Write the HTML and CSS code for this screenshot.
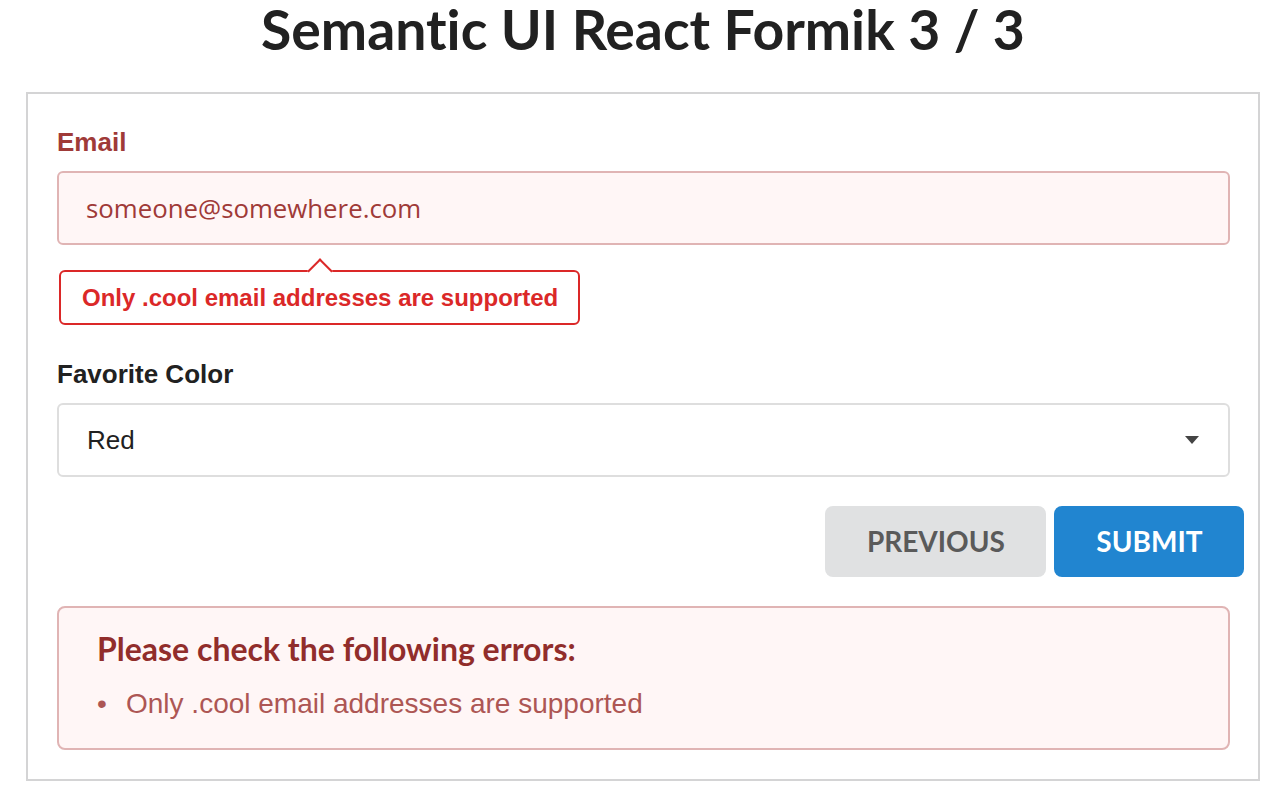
FILE: index.html
```html
<!DOCTYPE html>
<html lang="en">
<head>
<meta charset="utf-8">
<title>Semantic UI React Formik 3 / 3</title>
<link rel="stylesheet" href="styles.css">
</head>
<body>
<h1 class="title">Semantic UI React Formik 3 / 3</h1>
<div class="card">
  <form class="form">
    <div class="field field-error">
      <label class="field-label">Email</label>
      <div class="input input-error">someone@somewhere.com</div>
      <div class="pointing-label">Only .cool email addresses are supported</div>
    </div>
    <div class="field field-second">
      <label class="field-label">Favorite Color</label>
      <div class="dropdown">
        <span class="dropdown-text">Red</span>
        <svg class="caret" width="14" height="8" viewBox="0 0 14 8"><polygon points="0,0 14,0 7,8" fill="#444"/></svg>
      </div>
    </div>
    <div class="actions">
      <button type="button" class="btn btn-grey">Previous</button>
      <button type="button" class="btn btn-blue">Submit</button>
    </div>
    <div class="message">
      <div class="message-header">Please check the following errors:</div>
      <ul class="message-list">
        <li class="message-item"><span class="bullet">•</span><span>Only .cool email addresses are supported</span></li>
      </ul>
    </div>
  </form>
</div>
</body>
</html>
```

FILE: styles.css
```css
* { box-sizing: border-box; }
body {
  margin: 0;
  background: #ffffff;
  font-family: "Liberation Sans", Arial, sans-serif;
  color: rgba(0,0,0,.87);
}
.title {
  margin: 0 0 34px;
  font-family: Lato, "Liberation Sans", sans-serif;
  font-weight: 700;
  font-size: 55.3px;
  line-height: 58px;
  font-variant-ligatures: none;
  text-align: center;
  color: #212121;
}
.card {
  margin: 0 26px;
  border: 2px solid #d4d4d5;
  padding: 33px 28px 29px 29px;
}
.form { display: flex; flex-direction: column; }
.field { display: flex; flex-direction: column; align-items: flex-start; }
.field-label {
  font-size: 26px;
  line-height: 30px;
  font-weight: 700;
  margin-bottom: 14px;
  color: #212121;
}
.field-error .field-label { color: #9f3a38; }
.input {
  width: 100%;
  height: 74px;
  display: flex;
  align-items: center;
  padding: 0 28px 0 27px;
  border: 2px solid rgba(34,36,38,.15);
  border-radius: 6px;
  font-family: "Open Sans", sans-serif;
  font-size: 25.8px;
}
.input-error {
  background: #fff6f6;
  border-color: #e0b4b4;
  color: #9f3a38;
}
.pointing-label {
  position: relative;
  margin: 25px 0 0 2px;
  height: 55px;
  display: inline-flex;
  align-items: center;
  padding: 0 20px 0 21px;
  border: 2px solid #db2828;
  border-radius: 6px;
  background: #ffffff;
  color: #db2828;
  font-weight: 700;
  font-size: 24px;
}
.pointing-label::before {
  content: "";
  position: absolute;
  top: 0;
  left: 50%;
  width: 16px;
  height: 16px;
  background: #ffffff;
  border-top: 2px solid #db2828;
  border-left: 2px solid #db2828;
  transform: translate(-50%, -50%) translateY(-1px) rotate(45deg);
}
.field-second { margin-top: 34px; }
.dropdown {
  width: 100%;
  height: 74px;
  display: flex;
  align-items: center;
  justify-content: space-between;
  padding: 0 29px 0 28px;
  border: 2px solid #dedede;
  border-radius: 6px;
  font-size: 26px;
  color: #212121;
}
.caret { display: block; }
.actions {
  display: flex;
  justify-content: flex-end;
  gap: 8px;
  margin: 29px -14px 0 0;
}
.btn {
  font-family: Lato, "Liberation Sans", sans-serif;
  font-weight: 700;
  font-size: 28px;
  line-height: 28px;
  padding: 21px 41.5px 22px 42px;
  border: none;
  border-radius: 8px;
  text-transform: uppercase;
  cursor: pointer;
}
.btn-grey { background: #e0e1e2; color: #5a5a5a; }
.btn-blue { background: #2185d0; color: #ffffff; }
.message {
  margin-top: 29px;
  border: 2px solid #e0b4b4;
  border-radius: 8px;
  background: #fff6f6;
  padding: 23px 40px 24px 38px;
}
.message-header {
  font-family: Lato, "Liberation Sans", sans-serif;
  font-weight: 700;
  font-size: 32px;
  line-height: 36px;
  color: #912d2b;
}
.message-list {
  list-style: none;
  margin: 17px 0 0;
  padding: 0;
}
.message-item {
  display: flex;
  font-size: 28px;
  line-height: 40px;
  color: #ad5654;
}
.bullet {
  width: 29px;
  padding-left: 0;
}
```
